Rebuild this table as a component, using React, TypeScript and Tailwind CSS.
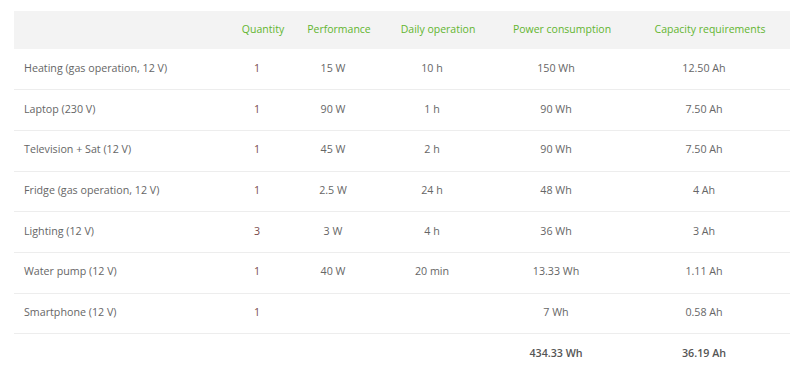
const rows = [
  ["Heating (gas operation, 12 V)", "1", "15 W", "10 h", "150 Wh", "12.50 Ah"],
  ["Laptop (230 V)", "1", "90 W", "1 h", "90 Wh", "7.50 Ah"],
  ["Television + Sat (12 V)", "1", "45 W", "2 h", "90 Wh", "7.50 Ah"],
  ["Fridge (gas operation, 12 V)", "1", "2.5 W", "24 h", "48 Wh", "4 Ah"],
  ["Lighting (12 V)", "3", "3 W", "4 h", "36 Wh", "3 Ah"],
  ["Water pump (12 V)", "1", "40 W", "20 min", "13.33 Wh", "1.11 Ah"],
  ["Smartphone (12 V)", "1", "", "", "7 Wh", "0.58 Ah"],
];

const headers = ["Quantity", "Performance", "Daily operation", "Power consumption", "Capacity requirements"];

export default function App() {
  return (
    <main
      className="h-[380px] w-[800px] bg-white pl-[14px] pr-[10px] pt-[11px] text-[10.7px] text-[#666]"
      style={{ fontFamily: '"Open Sans", "Noto Sans", sans-serif' }}
    >
      <table className="w-full table-fixed border-collapse">
        <colgroup>
          <col className="w-[216px]" />
          <col className="w-[66px]" />
          <col className="w-[86px]" />
          <col className="w-[112px]" />
          <col className="w-[136px]" />
          <col />
        </colgroup>
        <thead>
          <tr className="h-[38px] bg-[#f3f3f3]">
            <th />
            {headers.map((h) => (
              <th key={h} className="text-center text-[10.5px] font-normal text-[#62b52f]">
                {h}
              </th>
            ))}
          </tr>
        </thead>
        <tbody>
          {rows.map((r) => (
            <tr key={r[0]} className="h-[40.7px] border-b border-[#ededed]">
              <td className="pb-[3px] pl-[10px] text-left">{r[0]}</td>
              <td className="pb-[3px] pr-[12px] text-center text-[#7a4b4b]">{r[1]}</td>
              <td className="pb-[3px] pr-[12px] text-center">{r[2]}</td>
              <td className="pb-[3px] pr-[12px] text-center">{r[3]}</td>
              <td className="pb-[3px] pr-[12px] text-center">{r[4]}</td>
              <td className="pb-[3px] pr-[12px] text-center">{r[5]}</td>
            </tr>
          ))}
          <tr className="h-[40px] font-semibold text-[#555]">
            <td />
            <td />
            <td />
            <td />
            <td className="pb-[3px] pr-[12px] text-center">434.33 Wh</td>
            <td className="pb-[3px] pr-[12px] text-center">36.19 Ah</td>
          </tr>
        </tbody>
      </table>
    </main>
  );
}
